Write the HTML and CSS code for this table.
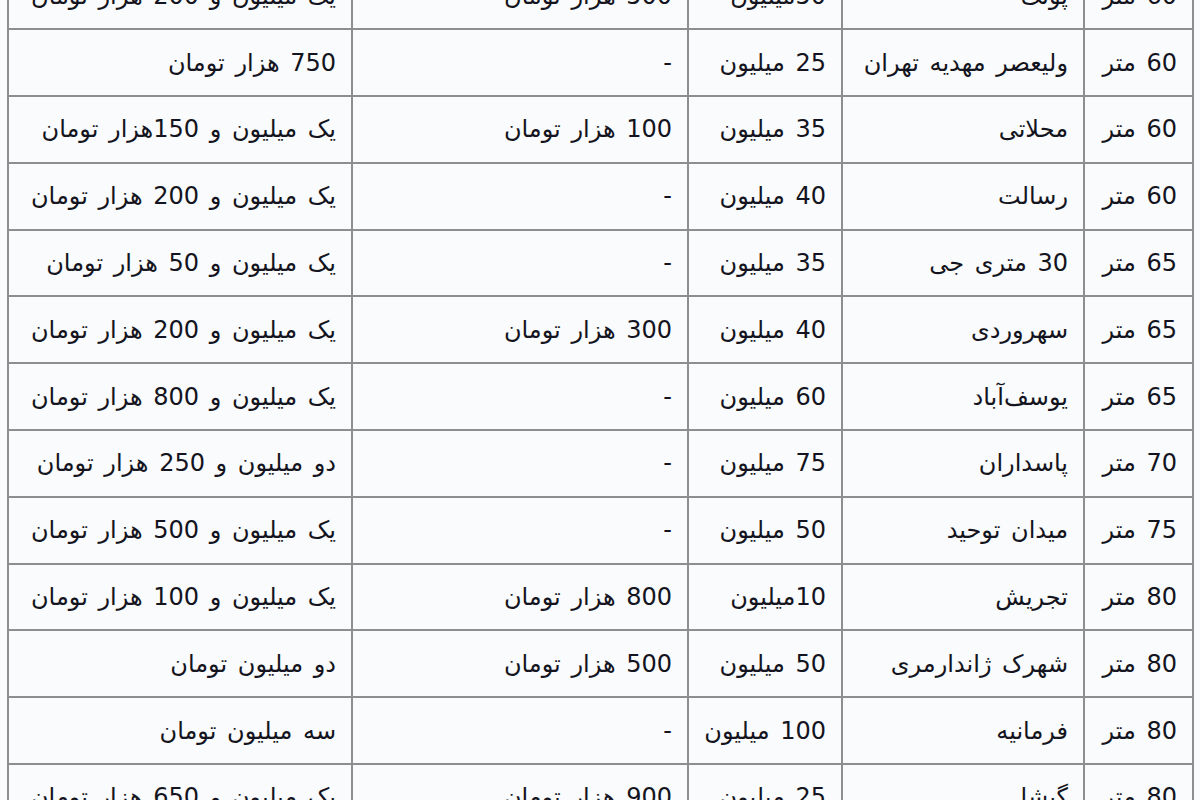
FILE: index.html
```html
<!DOCTYPE html>
<html lang="fa" dir="rtl">
<head>
<meta charset="utf-8">
<title>اجاره</title>
<link rel="stylesheet" href="styles.css">
</head>
<body>
<div class="wrap">
<table class="rent">
<colgroup>
<col class="c-area"><col class="c-place"><col class="c-dep"><col class="c-extra"><col class="c-rent">
</colgroup>
<tbody>
<tr><td>60 متر</td><td>پونک</td><td>50میلیون</td><td>500 هزار تومان</td><td>یک میلیون و 200 هزار تومان</td></tr>
<tr><td>60 متر</td><td>ولیعصر مهدیه تهران</td><td>25 میلیون</td><td>-</td><td>750 هزار تومان</td></tr>
<tr><td>60 متر</td><td>محلاتی</td><td>35 میلیون</td><td>100 هزار تومان</td><td>یک میلیون و 150هزار تومان</td></tr>
<tr><td>60 متر</td><td>رسالت</td><td>40 میلیون</td><td>-</td><td>یک میلیون و 200 هزار تومان</td></tr>
<tr><td>65 متر</td><td>30 متری جی</td><td>35 میلیون</td><td>-</td><td>یک میلیون و 50 هزار تومان</td></tr>
<tr><td>65 متر</td><td>سهروردی</td><td>40 میلیون</td><td>300 هزار تومان</td><td>یک میلیون و 200 هزار تومان</td></tr>
<tr><td>65 متر</td><td>یوسف‌آباد</td><td>60 میلیون</td><td>-</td><td>یک میلیون و 800 هزار تومان</td></tr>
<tr><td>70 متر</td><td>پاسداران</td><td>75 میلیون</td><td>-</td><td>دو میلیون و 250 هزار تومان</td></tr>
<tr><td>75 متر</td><td>میدان توحید</td><td>50 میلیون</td><td>-</td><td>یک میلیون و 500 هزار تومان</td></tr>
<tr><td>80 متر</td><td>تجریش</td><td>10میلیون</td><td>800 هزار تومان</td><td>یک میلیون و 100 هزار تومان</td></tr>
<tr><td>80 متر</td><td>شهرک ژاندارمری</td><td>50 میلیون</td><td>500 هزار تومان</td><td>دو میلیون تومان</td></tr>
<tr><td>80 متر</td><td>فرمانیه</td><td>100 میلیون</td><td>-</td><td>سه میلیون تومان</td></tr>
<tr><td>80 متر</td><td>گیشا</td><td>25 میلیون</td><td>900 هزار تومان</td><td>یک میلیون و 650 هزار تومان</td></tr>
</tbody>
</table>
</div>
</body>
</html>
```
FILE: styles.css
```css
html, body {
  margin: 0;
  padding: 0;
  background: #f9fbfc;
  overflow: hidden;
  height: 800px;
}
.wrap {
  padding-left: 9px;
  padding-right: 6px;
  margin-top: -38.5px;
}
.rent {
  width: 1185px;
  border-collapse: collapse;
  table-layout: fixed;
  font-family: "DejaVu Sans", Tahoma, sans-serif;
  font-size: 24px;
  word-spacing: 3px;
  color: #141420;
}
.c-area { width: 109px; }
.c-place { width: 242px; }
.c-dep { width: 154px; }
.c-extra { width: 336px; }
.c-rent { width: 344px; }
.rent tr { height: 66.8px; }
.rent td {
  border: 2px solid #8e8e8e;
  text-align: right;
  vertical-align: middle;
  padding: 0 15px 0 4px;
  white-space: nowrap;
  overflow: hidden;
}
```
